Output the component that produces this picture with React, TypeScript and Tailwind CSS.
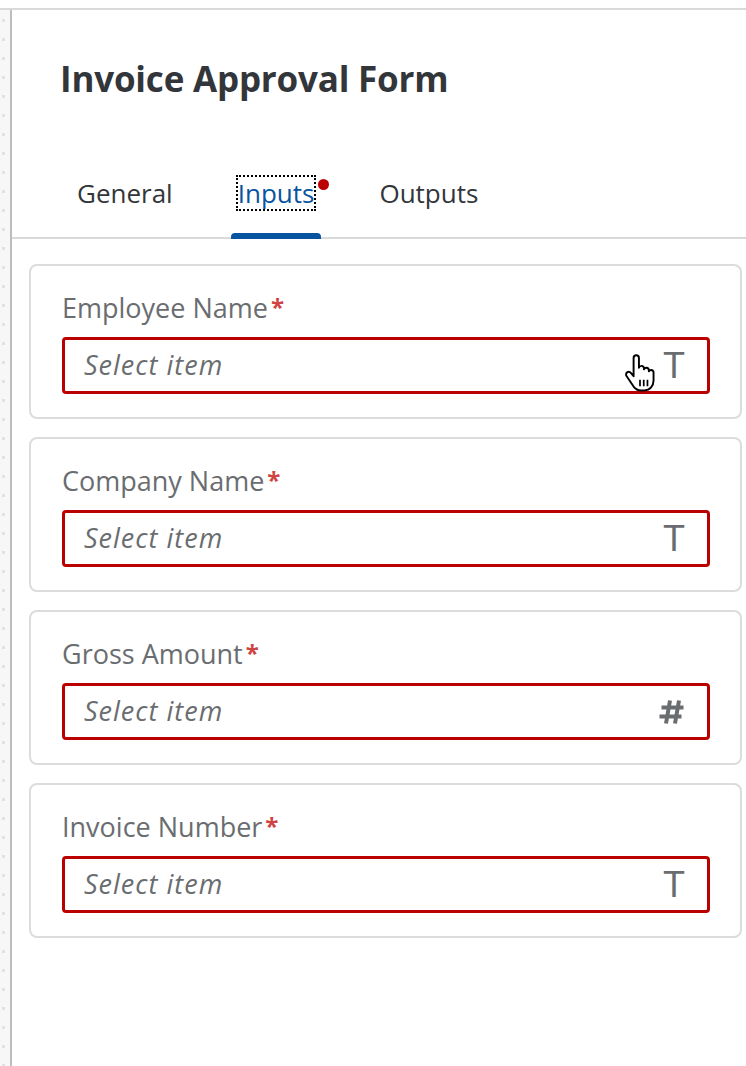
import React from "react";

const fields = [
  { label: "Employee Name", icon: "T" },
  { label: "Company Name", icon: "T" },
  { label: "Gross Amount", icon: "#" },
  { label: "Invoice Number", icon: "T" },
];

const HandCursor: React.FC = () => (
  <svg
    width="32"
    height="40"
    viewBox="0 0 30 37"
    className="absolute left-[593px] top-[88px]"
  >
    <path
      d="M9 3.5c0-1.6 1.2-2.6 2.5-2.6S14 1.9 14 3.5v9.2c.4-1.2 1.3-1.8 2.4-1.8 1.3 0 2.3 1 2.3 2.4v.8c.4-1 1.3-1.5 2.3-1.5 1.3 0 2.3 1 2.3 2.4v1c.4-.8 1.2-1.3 2.1-1.3 1.3 0 2.3 1 2.3 2.4v7.5c0 5-3.4 9.3-8.5 9.3h-3.2c-3 0-5.3-1.3-7-3.6L2.5 20.6c-.9-1.2-.7-2.8.4-3.6 1.1-.8 2.6-.6 3.5.5L9 20.6V3.5z"
      fill="#fff"
      stroke="#000"
      strokeWidth="1.8"
      strokeLinejoin="round"
    />
    <path d="M15 24v6M18.5 24v6M22 24v6" stroke="#000" strokeWidth="1.6" />
  </svg>
);

const HashIcon: React.FC = () => (
  <svg width="27" height="26" viewBox="0 0 27 26">
    <path
      d="M12 1.5 8 24.5M21 1.5 17 24.5M3.5 8.5h22M1.5 17.5h22"
      stroke="#6a6d70"
      strokeWidth="4"
      fill="none"
    />
  </svg>
);

const App: React.FC = () => {
  const dots = Array.from({ length: 56 });
  return (
    <div className="w-[746px] h-[1066px] bg-white overflow-hidden font-['Open_Sans',sans-serif]">
      <div className="h-[8px] bg-white" />
      <div className="flex h-[1058px] border-t-2 border-[#d9d9d9]">
        <div className="w-[10px] bg-[#f7f7f7] flex flex-col items-start gap-[16px] pt-[9px] pl-[2px]">
          {dots.map((_, i) => (
            <div key={i} className="w-[3px] h-[3px] bg-[#e2e2e2] shrink-0" />
          ))}
        </div>
        <div className="flex-1 border-l-2 border-[#bdbdbd] flex flex-col">
          <h1 className="pl-[48px] pt-[48px] text-[35px] leading-[42px] font-bold text-[#32363a] tracking-[-0.2px]">
            Invoice Approval Form
          </h1>
          <div className="mt-[77px] flex border-b-2 border-[#d9d9d9] pl-[58px] gap-[51px]">
            <div className="px-[7px] pb-[28px]">
              <span className="block text-[26px] leading-[32px] text-[#32363a]">General</span>
            </div>
            <div className="relative px-[7px] pb-[28px]">
              <span className="block text-[26px] leading-[32px] text-[#0854a0] outline-2 outline-dotted outline-black">
                Inputs
              </span>
              <span className="absolute right-[-8px] top-[2px] w-[11px] h-[11px] rounded-full bg-[#bb0000]" />
              <div className="absolute left-0 right-0 bottom-[-2px] h-[6px] rounded-t-[4px] bg-[#0854a0]" />
            </div>
            <div className="px-[7px] pb-[28px]">
              <span className="block text-[26px] leading-[32px] text-[#32363a]">Outputs</span>
            </div>
          </div>
          <div className="flex flex-col gap-[18px] pt-[25px] pl-[17px] pr-[4px]">
            {fields.map((f, i) => (
              <div
                key={f.label}
                className="relative h-[155px] border-2 border-[#dcdcdc] rounded-[8px] pl-[31px] pr-[30px] pt-[25px]"
              >
                <div className="text-[27px] leading-[34px] text-[#6a6d70]">
                  {f.label}
                  <span className="relative top-[-2px] ml-[3px] text-[#d04343] text-[24px] font-bold">*</span>
                </div>
                <div className="mt-[11px] h-[57px] border-[3px] border-[#bb0000] rounded-[4px] flex items-center justify-between pl-[19px] pr-[22px]">
                  <span className="italic text-[27px] tracking-[1px] text-[#6a6d70]">Select item</span>
                  {f.icon === "T" ? (
                    <span className="text-[36px] text-[#6a6d70] leading-none font-['Liberation_Sans',sans-serif]">
                      T
                    </span>
                  ) : (
                    <HashIcon />
                  )}
                </div>
                {i === 0 && <HandCursor />}
              </div>
            ))}
          </div>
        </div>
      </div>
    </div>
  );
};

export default App;
